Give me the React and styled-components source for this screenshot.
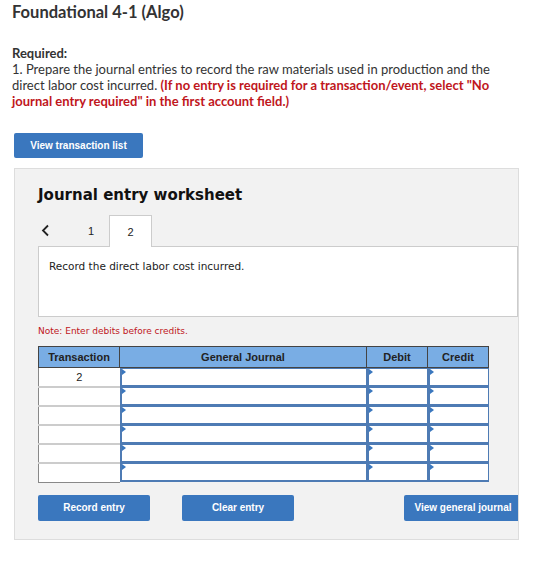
import React from "react";
import styled, { createGlobalStyle } from "styled-components";

const GlobalStyle = createGlobalStyle`
  body {
    margin: 0;
    background: #fff;
    font-family: Lato, "Liberation Sans", sans-serif;
    color: #333;
  }
`;

const rows = ["2", "", "", "", "", ""];

export default function App() {
  return (
    <Page>
      <GlobalStyle />
      <Title>Foundational 4-1 (Algo)</Title>
      <Required>Required:</Required>
      <Instructions>
        1. Prepare the journal entries to record the raw materials used in production and the direct
        labor cost incurred.{" "}
        <Warn>
          (If no entry is required for a transaction/event, select "No journal entry required" in
          the first account field.)
        </Warn>
      </Instructions>
      <TopButton>View transaction list</TopButton>

      <Panel>
        <PanelTitle>Journal entry worksheet</PanelTitle>
        <Tabs>
          <Arrow>
            <svg width="9" height="13" viewBox="0 0 9 13">
              <path d="M7 1.5 L2 6.5 L7 11.5" fill="none" stroke="#222" strokeWidth="1.8" />
            </svg>
          </Arrow>
          <Tab>1</Tab>
          <Tab $active>2</Tab>
          <TabLine />
        </Tabs>
        <Prompt>Record the direct labor cost incurred.</Prompt>
        <Note>Note: Enter debits before credits.</Note>

        <Table>
          <thead>
            <tr>
              <Th style={{ width: 80 }}>Transaction</Th>
              <Th>General Journal</Th>
              <Th style={{ width: 60 }}>Debit</Th>
              <Th style={{ width: 60 }}>Credit</Th>
            </tr>
          </thead>
          <tbody>
            {rows.map((t, i) => (
              <tr key={i}>
                <TxCell>{t}</TxCell>
                <InputCell>
                  <Field />
                </InputCell>
                <InputCell>
                  <Field />
                </InputCell>
                <InputCell>
                  <Field />
                </InputCell>
              </tr>
            ))}
          </tbody>
        </Table>

        <Actions>
          <ActionButton>Record entry</ActionButton>
          <ActionButton>Clear entry</ActionButton>
          <Spacer />
          <ActionButton $wide>View general journal</ActionButton>
        </Actions>
      </Panel>
    </Page>
  );
}

const Page = styled.div`
  padding: 2px 0 20px 12px;
  width: 548px;
  box-sizing: border-box;
`;

const Title = styled.h1`
  margin: 0;
  font-size: 16.5px;
  line-height: 20px;
  font-weight: 700;
  color: #333;
`;

const Required = styled.div`
  margin-top: 23px;
  font-size: 13px;
  line-height: 16px;
  font-weight: 700;
  color: #333;
`;

const Instructions = styled.p`
  margin: 0;
  width: 490px;
  font-size: 13px;
  line-height: 16px;
  color: #333;
`;

const Warn = styled.span`
  color: #c0161c;
  font-weight: 700;
`;

const TopButton = styled.button`
  display: block;
  margin: 24px 0 0 2px;
  width: 129px;
  height: 25px;
  border: none;
  border-radius: 2px;
  background: #3a77be;
  color: #fff;
  font-family: "Liberation Sans", Arial, sans-serif;
  font-size: 10px;
  font-weight: 700;
`;

const Panel = styled.div`
  margin: 10px 0 0 2px;
  width: 505px;
  box-sizing: border-box;
  padding: 17px 0 18px 23px;
  background: #f2f2f2;
  border: 1px solid #ddd;
  overflow: hidden;
`;

const PanelTitle = styled.div`
  font-family: "DejaVu Sans", Verdana, sans-serif;
  font-size: 15px;
  font-weight: 700;
  line-height: 18px;
  color: #111;
`;

const Tabs = styled.div`
  display: flex;
  align-items: stretch;
  height: 32px;
  margin-top: 11px;
`;

const Arrow = styled.div`
  width: 32px;
  padding-left: 3px;
  display: flex;
  align-items: center;
  border-bottom: 1px solid #ccc;
`;

const Tab = styled.div`
  width: ${(p) => (p.$active ? "41px" : "36px")};
  display: flex;
  align-items: center;
  justify-content: center;
  font-family: "Liberation Sans", Arial, sans-serif;
  font-size: 11px;
  color: #222;
  background: ${(p) => (p.$active ? "#fff" : "transparent")};
  border: ${(p) => (p.$active ? "1px solid #ccc" : "none")};
  border-bottom: ${(p) => (p.$active ? "none" : "1px solid #ccc")};
`;

const TabLine = styled.div`
  flex: 1;
  border-bottom: 1px solid #ccc;
`;

const Prompt = styled.div`
  height: 70px;
  box-sizing: border-box;
  padding: 13px 10px;
  background: #fff;
  border: 1px solid #ccc;
  border-top: none;
  font-family: "DejaVu Sans", Verdana, sans-serif;
  font-size: 10.5px;
  color: #222;
`;

const Note = styled.div`
  margin-top: 8px;
  font-family: "DejaVu Sans", Verdana, sans-serif;
  font-size: 9px;
  line-height: 12px;
  color: #c0161c;
`;

const Table = styled.table`
  margin-top: 9px;
  width: 451px;
  border-collapse: collapse;
  table-layout: fixed;
`;

const Th = styled.th`
  height: 20px;
  padding: 0;
  background: #79ade4;
  border: 1px solid #444;
  font-family: "Liberation Sans", Arial, sans-serif;
  font-size: 11px;
  font-weight: 700;
  color: #222;
`;

const TxCell = styled.td`
  height: 16px;
  padding: 0;
  background: #fff;
  border-left: 1px solid #888;
  border-bottom: 2px solid #ccc;
  text-align: center;
  font-family: "Liberation Sans", Arial, sans-serif;
  font-size: 11px;
  color: #222;
  tr:last-child & {
    border-bottom: 1px solid #888;
  }
`;

const InputCell = styled.td`
  padding: 1px 1px 2px 2px;
  background: #4e7bb4;
  height: 16px;
`;

const Field = styled.div`
  position: relative;
  height: 15.7px;
  background: #fff;
  &::before {
    content: "";
    position: absolute;
    top: 0;
    left: 0;
    border-left: 4px solid #3a77be;
    border-top: 3px solid transparent;
    border-bottom: 3px solid transparent;
  }
`;

const Actions = styled.div`
  display: flex;
  gap: 32px;
  margin-top: 12px;
`;

const Spacer = styled.div`
  flex: 1;
`;

const ActionButton = styled.button`
  width: ${(p) => (p.$wide ? "114px" : "112px")};
  height: 26px;
  padding: ${(p) => (p.$wide ? "0 0 0 4px" : "0")};
  border: none;
  border-radius: ${(p) => (p.$wide ? "2px 0 0 2px" : "2px")};
  background: #3a77be;
  color: #fff;
  font-family: "Liberation Sans", Arial, sans-serif;
  font-size: 10px;
  font-weight: 700;
`;
